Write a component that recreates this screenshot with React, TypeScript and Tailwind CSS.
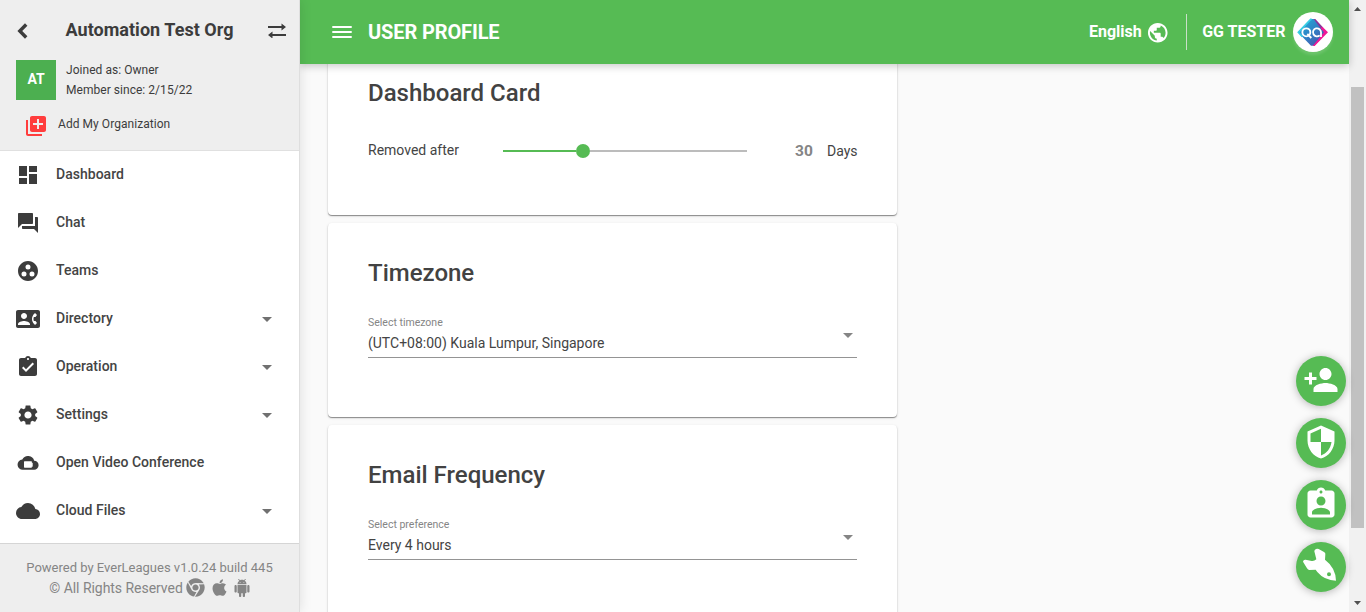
import React from "react";
import type { ReactNode } from "react";
import {
  MdDashboard, MdForum, MdGroupWork, MdContactPhone, MdAssignmentTurnedIn, MdSettings,
  MdCloud, MdPublic, MdPersonAdd, MdSecurity, MdAssignmentInd, MdArrowDropDown, MdMenu, MdLibraryAdd,
} from "react-icons/md";
import { FaChrome, FaApple } from "react-icons/fa";

function VideoCloud() {
  return (
    <svg viewBox="0 1 24 24" className="size-6" fill="currentColor">
      <path fillRule="evenodd" d="M18.200 10.700A6.400 6.400 0 0 0 6.300 9.500 5.100 5.100 0 0 0 7 19.700h11a4.500 4.500 0 0 0 .2-9z M8.600 11.300h6.700q.6 0 .6.6v1.300l.8-.6v4.300l-.8-.6v.8q0 .6-.6.6H8.600q-.6 0-.6-.6v-5.200q0-.6.6-.6z" />
    </svg>
  );
}

function Android() {
  return (
    <svg viewBox="0 0 24 24" className="size-[18px]" fill="currentColor">
      <path d="M6 18c0 .55.45 1 1 1h1v3.500c0 .83.67 1.500 1.500 1.500s1.500-.67 1.500-1.500V19h2v3.500c0 .83.67 1.500 1.500 1.500s1.500-.67 1.500-1.500V19h1c.55 0 1-.45 1-1V8H6v10zM3.500 8C2.670 8 2 8.670 2 9.500v7c0 .83.67 1.500 1.500 1.500S5 17.330 5 16.500v-7C5 8.670 4.330 8 3.500 8zm17 0c-.83 0-1.500.67-1.500 1.500v7c0 .83.67 1.500 1.500 1.500s1.500-.67 1.500-1.500v-7c0-.83-.67-1.500-1.500-1.500zm-4.970-5.840l1.300-1.300c.2-.2.2-.51 0-.71-.2-.2-.51-.2-.71 0l-1.480 1.480C13.850 1.230 12.950 1 12 1c-.96 0-1.860.23-2.660.63L7.850.15c-.2-.2-.51-.2-.71 0-.2.2-.2.51 0 .71l1.310 1.310C6.970 3.260 6 5.010 6 7h12c0-1.990-.97-3.750-2.470-4.840zM10 5H9V4h1v1zm5 0h-1V4h1v1z" />
    </svg>
  );
}

function Avatar() {
  return (
    <svg viewBox="0 0 120 120" className="size-10 rounded-full bg-white shadow-[0_3px_3px_rgba(255,255,255,0.14)]">
      <defs>
        <linearGradient id="face" x1="0" y1="0" x2="1" y2="1">
          <stop offset="0" stopColor="#22b4dc" />
          <stop offset="0.5" stopColor="#2f80c4" />
          <stop offset="1" stopColor="#5546a8" />
        </linearGradient>
      </defs>
      <path d="M54 21h10L100 61 64 101H54L15 61z" fill="url(#face)" />
      <path d="M56 22h-3L16 61l12 13" fill="none" stroke="#37cde4" strokeWidth="5" />
      <path d="M62 21h5l24 26-5 6z" fill="#8b3498" />
      <path d="M88 44l17 17-40 41h-6l34-41-10-12z" fill="#f01796" />
      <g fill="none" stroke="#fff" strokeWidth="5.500">
        <circle cx="40" cy="61" r="12" />
        <path d="M43 66l12 12M84 75V61a12 12 0 1 0-4 9" />
      </g>
    </svg>
  );
}

function Rocket() {
  return (
    <svg viewBox="90 210 150 150" className="size-[50px]" fill="currentColor">
      <path fillRule="evenodd" d="M150 231 Q154 229 158 231 L174 240 Q179 242 178 247 L177 263 Q209 287 210 326 Q176 326 154 300 L149 293 L130 294 Q126 294 123 289 L111 269 Q112 262 119 263 L137 267 Q145 268 151 262 L145 238 Q145 233 150 231Z M189 301a6 6 0 1 0 .01 12a6 6 0 0 0-.01-12z" />
    </svg>
  );
}

const navigation: { label: string; icon: ReactNode; expandable?: boolean }[] = [
  { label: "Dashboard", icon: <MdDashboard /> },
  { label: "Chat", icon: <MdForum /> },
  { label: "Teams", icon: <MdGroupWork /> },
  { label: "Directory", icon: <MdContactPhone />, expandable: true },
  { label: "Operation", icon: <MdAssignmentTurnedIn />, expandable: true },
  { label: "Settings", icon: <MdSettings />, expandable: true },
  { label: "Open Video Conference", icon: <VideoCloud /> },
  { label: "Cloud Files", icon: <MdCloud />, expandable: true },
];

const shortcuts: ReactNode[] = [
  <MdPersonAdd className="mb-[3px] size-9" />,
  <MdSecurity className="mb-[3px] size-9" />,
  <MdAssignmentInd className="mb-[3px] size-9" />,
  <Rocket />,
];

function Sidebar() {
  return (
    <aside className="relative z-10 flex h-full w-[300px] shrink-0 flex-col border-r border-[#dedede] bg-white shadow-[0_0_12px_rgba(0,0,0,0.12)]">
      <div className="h-[151px] shrink-0 border-b border-[#e0e0e0] bg-[#eee]">
        <div className="flex h-[60px] items-center pl-4 pr-3">
          <svg viewBox="0 0 14 18" className="mt-[2px] h-[18px] w-[14px]" fill="none" stroke="currentColor" strokeWidth="3.400">
            <path d="M10.200 2.500 3.800 9l6.400 6.500" />
          </svg>
          <h1 className="mb-[2px] flex-1 pl-[2px] text-center text-[18px] font-bold tracking-[0.03px]">Automation Test Org</h1>
          <svg viewBox="0 0 20 16" className="h-4 w-5" fill="none" stroke="currentColor" strokeWidth="2.200">
            <path d="M1 5h15M4 13h15" />
            <path d="M14.500 1.500l4.500 3.500L14.500 8.500zM5.500 9.500 1 13 5.500 16.500z" fill="currentColor" stroke="none" />
          </svg>
        </div>
        <div className="flex h-10 gap-[10px] pl-4">
          <div className="flex size-10 items-center justify-center bg-[#4caf50] pb-[2px] text-[14px] font-bold text-white">AT</div>
          <div className="text-[12px] leading-5 tracking-[0.04px]"><p>Joined as: Owner</p><p>Member since: 2/15/22</p></div>
        </div>
        <div className="flex h-[50px] items-center pl-6 text-[12px] tracking-[0.05px]">
          <MdLibraryAdd className="mt-[2px] size-6 text-[#ff3d3d]" />
          <span className="mb-[2px] ml-[10px]">Add My Organization</span>
        </div>
      </div>
      <nav className="min-h-0 flex-1 overflow-hidden">
        {navigation.map((item) => (
          <a key={item.label} className="flex h-12 items-center pl-4 pr-5 text-[14px] font-medium tracking-[0.02px]">
            <span className="flex size-6 items-center [&>svg]:size-6">{item.icon}</span>
            <span className="mb-[2px] ml-4 flex-1 text-[#444]">{item.label}</span>
            {item.expandable && <MdArrowDropDown className="size-6 text-[#707070]" />}
          </a>
        ))}
      </nav>
      <footer className="h-[69px] shrink-0 border-t border-[#d5d5d5] bg-[#eee] pt-[14px] text-center text-[13px] leading-5 text-[#858585]">
        <p>Powered by EverLeagues v1.0.24 build 445</p>
        <div className="flex h-[19px] items-center justify-center pl-px">
          <span className="text-[14px] tracking-[-0.04px]">© All Rights Reserved</span>
          <FaChrome className="ml-[3px] size-[19px]" />
          <FaApple className="ml-[5px] mr-[4px] size-[19px]" />
          <Android />
        </div>
      </footer>
    </aside>
  );
}

function SelectField({ label, value }: { label: string; value: string }) {
  return (
    <div className="flex h-[43px] border-b border-[#949494]">
      <div className="flex-1">
        <p className="text-[10.500px] leading-4 text-[#858585]">{label}</p>
        <p className="pt-[2px] text-[14px] leading-5 text-[#444]">{value}</p>
      </div>
      <MdArrowDropDown className="-mr-[3px] mt-[8px] size-6 text-[#858585]" />
    </div>
  );
}

function Card({ title, children }: { title: string; children: ReactNode }) {
  return (
    <section className="w-[569px] rounded bg-white px-10 shadow-[0_1px_1px_rgba(0,0,0,0.4),0_1px_3px_rgba(0,0,0,0.12)]">
      <h2 className="pt-[34px] text-[24px] font-medium leading-8 text-[#424242]">{title}</h2>
      {children}
    </section>
  );
}

export default function App() {
  return (
    <div className="flex h-[612px] w-[1366px] overflow-hidden bg-[#fafafa] font-[Roboto,sans-serif] text-[#3c3c3c]">
      <Sidebar />
      <main className="relative flex h-full w-[1049px] shrink-0 flex-col">
        <header className="z-[5] flex h-16 shrink-0 items-center bg-[#56bb54] pl-[30px] pr-4 text-white shadow-[0_2px_8px_rgba(0,0,0,0.22)]">
          <MdMenu className="size-6 scale-x-[1.08]" />
          <h1 className="ml-[14px] flex-1 text-[20px] font-bold tracking-[-0.12px]">USER PROFILE</h1>
          <span className="text-[16px] font-bold">English</span>
          <MdPublic className="ml-1 mr-px mt-[2px] size-[23.500px]" />
          <span className="ml-4 mr-[15px] h-9 w-px bg-[#c9dfc8]" />
          <span className="mr-[7.500px] text-[16px] font-bold">GG TESTER</span>
          <Avatar />
        </header>
        <div className="min-h-0 flex-1 overflow-hidden pl-7">
          <div className="-mt-[21px] flex flex-col gap-2">
            <Card title="Dashboard Card">
              <div className="-mr-2 flex h-[106px] items-start pt-[31px] text-[14px] leading-5 text-[#444]">
                <span className="w-[135px] shrink-0">Removed after</span>
                <div className="mt-[4px] flex h-[14px] w-[244px] shrink-0 items-center">
                  <span className="h-[2px] w-[72.500px] bg-[#56bb54]" />
                  <span className="size-[14px] rounded-full bg-[#56bb54]" />
                  <span className="h-[2px] flex-1 bg-[#bcbcbc]" />
                </div>
                <strong className="ml-12 w-8 shrink-0 pt-px text-[15.500px] font-bold text-[#858585]">30</strong>
                <span className="pt-px">Days</span>
              </div>
            </Card>
            <Card title="Timezone">
              <div className="h-[128px] pt-[26px]"><SelectField label="Select timezone" value="(UTC+08:00) Kuala Lumpur, Singapore" /></div>
            </Card>
            <Card title="Email Frequency">
              <div className="h-[128px] pt-[26px]"><SelectField label="Select preference" value="Every 4 hours" /></div>
            </Card>
          </div>
        </div>
        <div className="absolute right-[3px] top-[356px] flex flex-col gap-3 text-white">
          {shortcuts.map((icon, index) => (
            <button key={index} className="flex size-[50px] items-center justify-center rounded-full bg-[#56bb54] shadow-[0_1px_9px_rgba(0,0,0,0.28)]">{icon}</button>
          ))}
        </div>
      </main>
      <div className="flex h-full w-[17px] flex-col items-center bg-[#f1f1f1] text-[#505050]">
        <svg viewBox="0 0 17 17" className="h-[17px] w-[17px]" fill="currentColor"><path d="M5 11h7L8.500 7z" /></svg>
        <div className="mt-[70px] h-[441px] w-[13px] bg-[#c1c1c1]" />
        <svg viewBox="0 0 17 17" className="mt-auto h-[17px] w-[17px]" fill="currentColor"><path d="M5 6h7l-3.500 4z" /></svg>
      </div>
    </div>
  );
}
